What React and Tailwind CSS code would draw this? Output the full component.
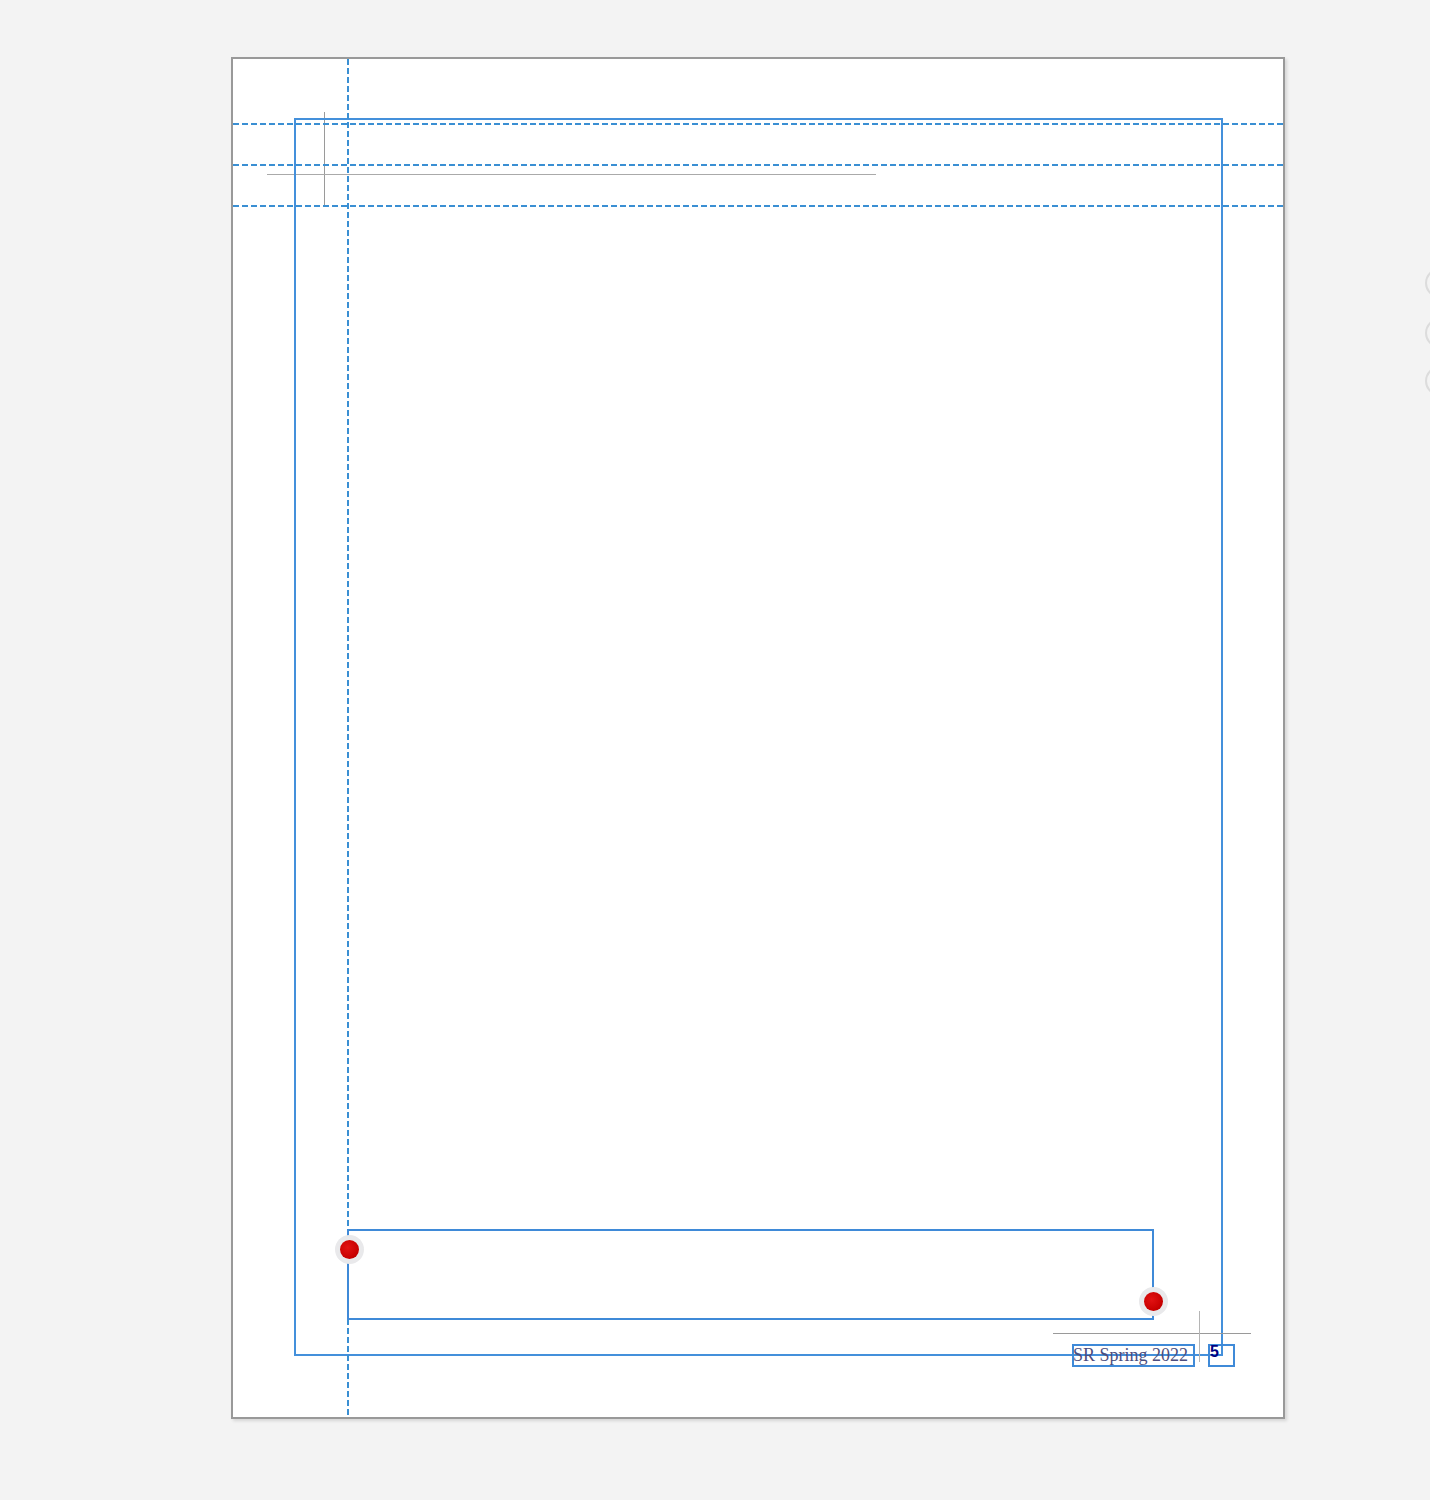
function Handle({ className }) {
  return (
    <div className={`absolute w-[29px] h-[29px] rounded-full bg-[#e9e9eb] flex items-center justify-center ${className}`}>
      <div className="w-[19px] h-[19px] rounded-full bg-[radial-gradient(circle_at_40%_40%,#e21212,#c80000_65%,#a50000)]" />
    </div>
  );
}

export default function App() {
  const hGuides = [124, 165, 206];
  return (
    <div className="relative w-[1430px] h-[1500px] bg-[#f3f3f3] overflow-hidden">
      {/* page */}
      <div className="absolute left-[231px] top-[57px] w-[1054px] h-[1362px] border-2 border-[#999999] bg-white shadow-[2px_2px_3px_rgba(0,0,0,0.12)]" />

      {/* gray thin marks */}
      <div className="absolute left-[324px] top-[112px] w-px h-[94px] bg-[#9a9a9a]" />
      <div className="absolute left-[267px] top-[174px] w-[609px] h-px bg-[#aaaaaa]" />

      {/* blue main frame */}
      <div className="absolute left-[294px] top-[118px] w-[929px] h-[1238px] border-2 border-[#4490db]" />

      {/* guides */}
      <svg className="absolute left-0 top-0" width="1430" height="1500">
        {hGuides.map((y) => (
          <line key={y} x1="233" y1={y} x2="1283" y2={y} stroke="#3a8fd3" strokeWidth="2" strokeDasharray="6 3" />
        ))}
        <line x1="348" y1="59" x2="348" y2="1417" stroke="#3a8fd3" strokeWidth="2" strokeDasharray="6 3" />
      </svg>

      {/* bottom box */}
      <div className="absolute left-[347px] top-[1229px] w-[807px] h-[91px] border-2 border-[#3f8ad8]" />

      {/* red handles */}
      <Handle className="left-[335px] top-[1235px]" />
      <Handle className="left-[1139px] top-[1287px]" />

      {/* footer marks */}
      <div className="absolute left-[1053px] top-[1333px] w-[198px] h-px bg-[#9a9a9a]" />
      <div className="absolute left-[1199px] top-[1311px] w-px h-[51px] bg-[#b5b5b5]" />

      {/* footer text frame */}
      <div className="absolute left-[1072px] top-[1344px] w-[123px] h-[23px] border-2 border-[#3f8ad8]">
        <span className="absolute left-[-1px] top-[-3px] whitespace-nowrap text-[18px] leading-[24px] text-[#4d4d7d] font-['Liberation_Serif',serif]">
          SR Spring 2022
        </span>
      </div>
      <div className="absolute left-[1208px] top-[1344px] w-[27px] h-[23px] border-2 border-[#3f8ad8]">
        <span className="absolute left-[0px] top-[-4px] text-[16px] leading-[20px] font-bold text-[#000080] font-['Liberation_Sans',sans-serif]">
          5
        </span>
      </div>

      {/* side circles */}
      <div className="absolute left-[1425px] top-[268px] w-[30px] h-[30px] rounded-full border-2 border-[#dcdcdc]" />
      <div className="absolute left-[1425px] top-[318px] w-[30px] h-[30px] rounded-full border-2 border-[#dcdcdc]" />
      <div className="absolute left-[1425px] top-[366px] w-[30px] h-[30px] rounded-full border-2 border-[#dcdcdc]" />
    </div>
  );
}
